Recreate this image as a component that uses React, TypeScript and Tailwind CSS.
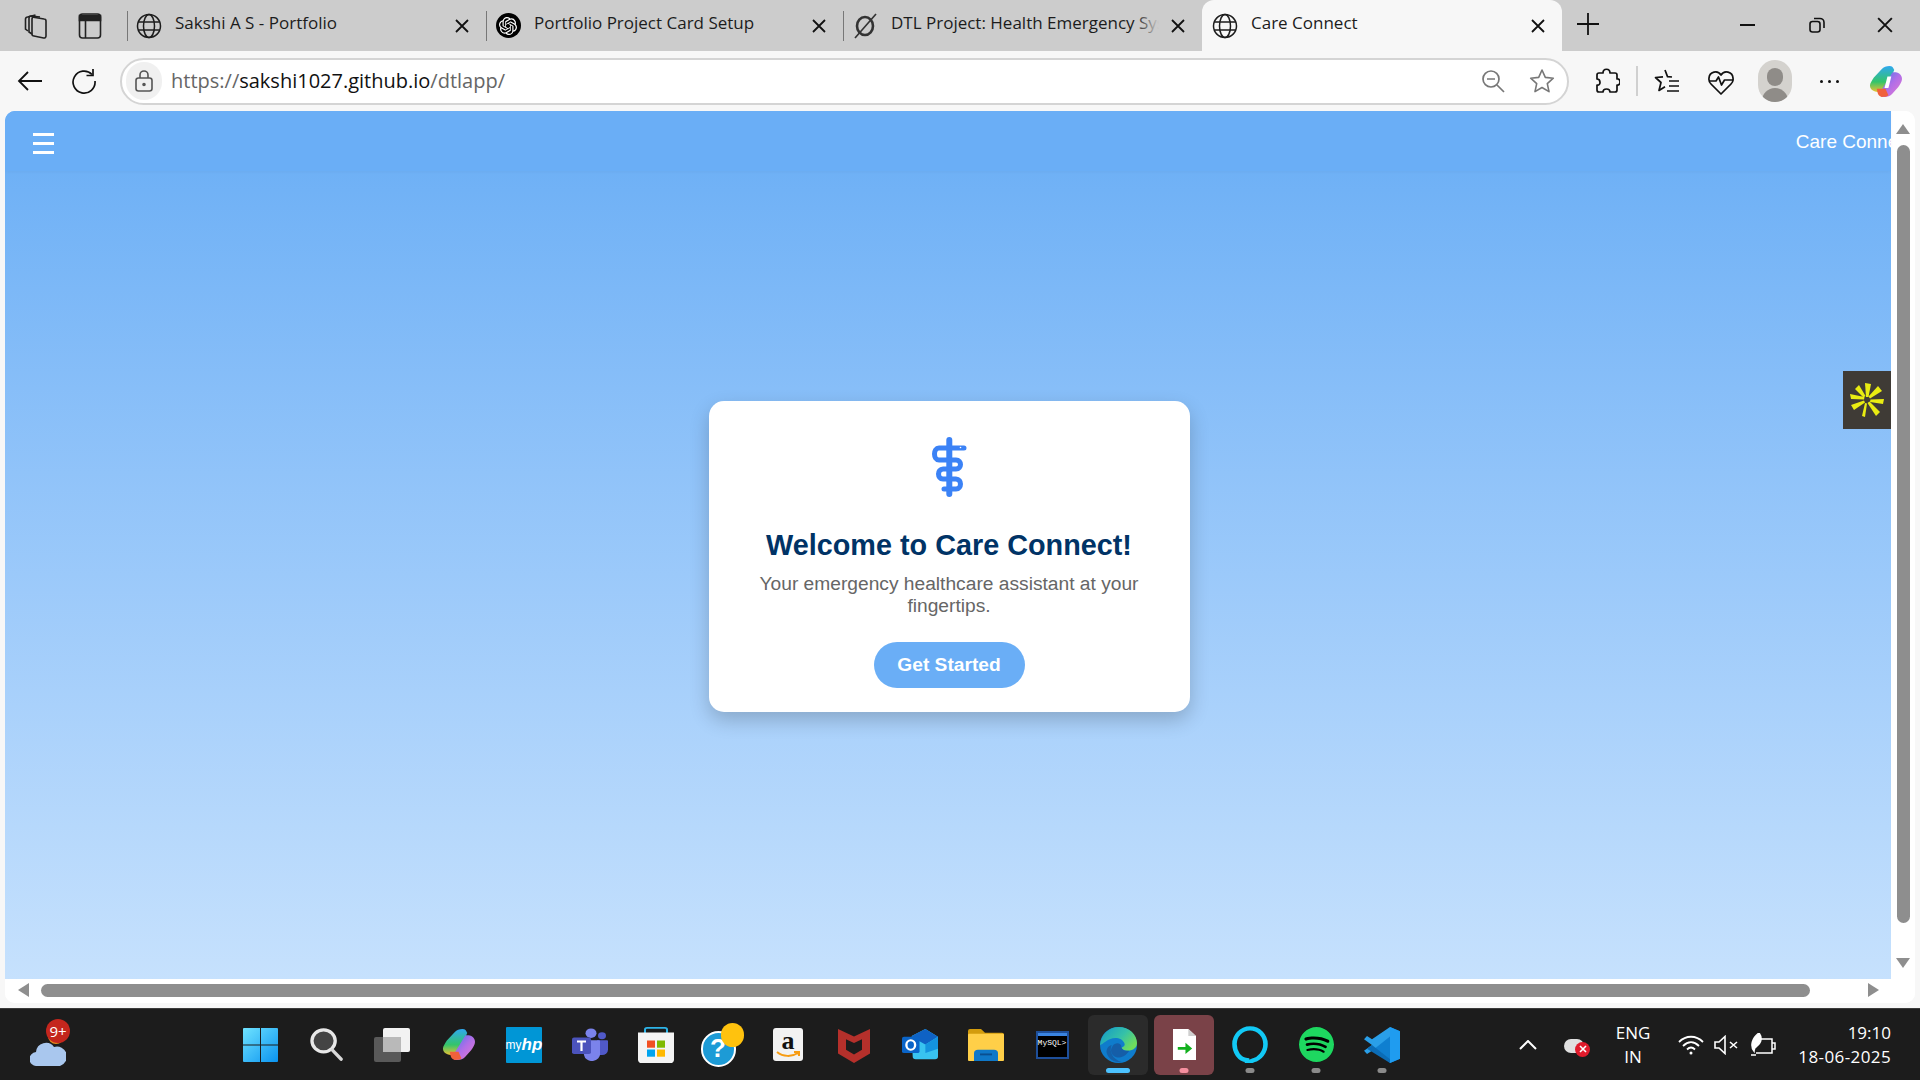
import React from 'react';
import { SiOpenai, SiSpotify } from 'react-icons/si';

const UI_FONT = { fontFamily: '"Open Sans", "Noto Sans", sans-serif' };

const GlobeIcon = () => (
  <svg width="26" height="26" viewBox="0 0 26 26" fill="none" stroke="#1c1c1c" strokeWidth="1.5">
    <circle cx="13" cy="13" r="11.5" />
    <ellipse cx="13" cy="13" rx="5.5" ry="11.5" />
    <path d="M2.5 9h21M2.5 17h21" />
  </svg>
);

const PerplexityIcon = () => (
  <svg width="26" height="28" viewBox="0 0 26 28" fill="none" stroke="#333" strokeWidth="2.6">
    <ellipse cx="13" cy="14" rx="8" ry="9" />
    <path d="M24 2 3 26" strokeWidth="1.6" />
  </svg>
);

const OpenAiIcon = () => (
  <div className="flex h-[25px] w-[25px] items-center justify-center rounded-full bg-black text-white">
    <SiOpenai size={18} />
  </div>
);

const CloseIcon = ({ size = 14, width = 1.8 }: { size?: number; width?: number }) => (
  <svg width={size} height={size} viewBox="0 0 14 14" stroke="#111" strokeWidth={width} fill="none">
    <path d="M1 1l12 12M13 1 1 13" />
  </svg>
);

type TabProps = {
  icon: React.ReactNode;
  title: string;
  width: string;
  active?: boolean;
  fade?: boolean;
};

const Tab = ({ icon, title, width, active, fade }: TabProps) => (
  <div className={`relative flex h-[51px] shrink-0 items-center ${width} ${active ? 'rounded-t-[12px] bg-[#f7f7f7] pl-[10px]' : 'pl-[9px]'}`}>
    {!active && <div className="absolute left-0 top-[11px] h-[30px] w-[1px] bg-[#777]" />}
    <div className="flex w-[26px] shrink-0 items-center justify-center">{icon}</div>
    <div className="relative ml-[13px] mb-[5px] w-[268px] overflow-hidden whitespace-nowrap text-[17px] text-[#1c1c1c]">
      {title}
      {fade && <div className="absolute inset-y-0 right-0 w-[24px] bg-gradient-to-r from-transparent to-[#cccccc]" />}
    </div>
    <div className="ml-auto mr-[17px] flex h-[26px] items-center">
      <CloseIcon />
    </div>
  </div>
);

const TabStrip = () => (
  <div className="flex h-[51px] shrink-0 items-start bg-[#cccccc]" style={UI_FONT}>
    <div className="flex h-[51px] w-[127px] shrink-0 items-center pl-[23px]">
      <svg width="26" height="28" viewBox="0 0 26 28" fill="none" stroke="#222" strokeWidth="1.6">
        <path d="M9 5l12 2a2 2 0 0 1 2 2v15a2 2 0 0 1-2.4 2L11 24a2 2 0 0 1-2-2V7a2 2 0 0 1 2-2z" />
        <path d="M9 22 6 20V6a2 2 0 0 1 2-2l9 1" />
        <path d="M5 19 2.5 17V7a2 2 0 0 1 2-2l8-2" />
      </svg>
      <svg className="ml-[29px]" width="24" height="28" viewBox="0 0 24 28" fill="none" stroke="#222" strokeWidth="1.6">
        <rect x="1.5" y="2" width="21" height="24" rx="3" />
        <path d="M1.5 3.5h21v5h-21z" fill="#222" />
        <path d="M7.5 8v18" />
      </svg>
    </div>
    <Tab icon={<GlobeIcon />} title="Sakshi A S - Portfolio" width="w-[359px]" />
    <Tab icon={<OpenAiIcon />} title="Portfolio Project Card Setup" width="w-[357px]" />
    <Tab icon={<PerplexityIcon />} title="DTL Project: Health Emergency System" width="w-[359px]" fade />
    <Tab icon={<GlobeIcon />} title="Care Connect" width="w-[360px]" active />
    <div className="ml-[15px] flex h-[47px] items-center">
      <svg width="22" height="22" viewBox="0 0 22 22" stroke="#111" strokeWidth="1.8">
        <path d="M11 0v22M0 11h22" />
      </svg>
    </div>
    <div className="ml-auto flex h-[50px] items-center">
      <div className="flex w-[69px] justify-center">
        <div className="h-[2px] w-[15px] bg-[#111]" />
      </div>
      <div className="flex w-[69px] justify-center">
        <svg width="16" height="16" viewBox="0 0 16 16" fill="none" stroke="#111" strokeWidth="1.6">
          <rect x="1" y="4.5" width="10" height="10.5" rx="2.5" />
          <path d="M5 1.5h6A4 4 0 0 1 15 5.5V11" />
        </svg>
      </div>
      <div className="flex w-[69px] justify-center pr-[2px]">
        <CloseIcon size={16} width={1.7} />
      </div>
    </div>
  </div>
);

const CopilotMark = ({ a, b, slit }: { a: string; b: string; slit?: boolean }) => (
  <svg width="33" height="31" viewBox="0 0 34 38" preserveAspectRatio="none">
    <defs>
      <linearGradient id={a} x1="0" y1="0" x2="0" y2="1">
        <stop offset="0" stopColor="#2fa8f0" />
        <stop offset="0.6" stopColor="#34c46a" />
        <stop offset="1" stopColor="#f2c230" />
      </linearGradient>
      <linearGradient id={b} x1="0" y1="0" x2="1" y2="1">
        <stop offset="0" stopColor="#3a7bea" />
        <stop offset="0.5" stopColor="#b06ee8" />
        <stop offset="1" stopColor="#e87ad0" />
      </linearGradient>
    </defs>
    <path d="M13 4c2-3 5-4 8-4 3 0 4 2 5 5l-9 24c-1 3-3 4-6 3-5 0-10-2-10-8 0-3 2-6 4-10z" fill={`url(#${a})`} />
    <path d="M24 8c4-1 10 1 10 8 0 3-2 7-4 10l-6 8c-2 3-5 4-8 4-3 0-4-1-5-5z" fill={`url(#${b})`} />
    <path d="M8 28h9l3 8c-2 2-4 2-7 2-3-1-4-3-5-10z" fill="#f0603c" />
    {slit && <path d="M19 13h4l-3 14h-4z" fill="#fff" />}
  </svg>
);

const Toolbar = () => (
  <div className="flex h-[60px] shrink-0 items-center bg-[#f7f7f7]" style={UI_FONT}>
    <div className="flex w-[60px] justify-center">
      <svg width="26" height="22" viewBox="0 0 26 22" fill="none" stroke="#111" strokeWidth="1.8">
        <path d="M25 11H2M11 2l-9 9 9 9" />
      </svg>
    </div>
    <div className="flex w-[48px] justify-center">
      <svg width="26" height="26" viewBox="0 0 26 26" fill="none" stroke="#111" strokeWidth="1.7">
        <path d="M21 6.5A11 11 0 1 0 24 13" />
        <path d="M22 1v6.5h-6.5" />
      </svg>
    </div>
    <div className="ml-[12px] flex h-[47px] w-[1449px] items-center rounded-full border-2 border-[#d4d4d4] bg-white pl-[4px] pr-[12px]">
      <div className="flex h-[38px] w-[36px] items-center justify-center rounded-full bg-[#f0f0f0]">
        <svg width="20" height="24" viewBox="0 0 20 24" fill="none" stroke="#555" strokeWidth="1.6">
          <rect x="2" y="9" width="16" height="13" rx="2.5" />
          <path d="M6 9V6a4 4 0 0 1 8 0v3" />
          <circle cx="10" cy="15.5" r="1" fill="#555" />
        </svg>
      </div>
      <span className="ml-[9px] whitespace-nowrap text-[20px] text-[#666]">
        https://<span className="text-[#111]">sakshi1027.github.io</span>/dtlapp/
      </span>
      <svg className="ml-auto" width="24" height="24" viewBox="0 0 24 24" fill="none" stroke="#777" strokeWidth="1.7">
        <circle cx="10" cy="10" r="8" />
        <path d="M6 10h8M16 16l7 7" />
      </svg>
      <svg className="ml-[24px]" width="26" height="26" viewBox="0 0 26 26" fill="none" stroke="#777" strokeWidth="1.6">
        <path d="M13 2l3.3 7.4 8 .8-6 5.4 1.700 8L13 19.5 6 23.6l1.700-8-6-5.400 8-.8z" strokeLinejoin="round" />
      </svg>
    </div>
    <div className="ml-[25px] flex items-center">
      <svg width="26" height="28" viewBox="0 0 26 28" fill="none" stroke="#111" strokeWidth="1.7" strokeLinejoin="round">
        <path d="M9 6c0-5 7-5 7 0h5a2 2 0 0 1 2 2v4c4-1 4 7 0 6v5a2 2 0 0 1-2 2h-5c0-4-7-4-7 0H5a2 2 0 0 1-2-2v-5c4 1 4-6 0-6V8a2 2 0 0 1 2-2z" />
      </svg>
      <div className="ml-[16px] h-[30px] w-[2px] bg-[#d0d0d0]" />
      <svg className="ml-[16px]" width="26" height="26" viewBox="0 0 26 26" fill="none" stroke="#111" strokeWidth="1.7" strokeLinejoin="round">
        <path d="M11 2l2.500 6.600 4.500.4M9 8.800l-7.500.7 5.500 5-2 8 6-3.800" />
        <path d="M15 13h10M15 18h10M13 23h12" />
      </svg>
      <svg className="ml-[27px]" width="28" height="28" viewBox="0 0 28 28" fill="none" stroke="#111" strokeWidth="1.7" strokeLinejoin="round">
        <path d="M4 17a7 7 0 0 1-2-6 6.500 6.500 0 0 1 12-3 6.500 6.500 0 0 1 12 3 7 7 0 0 1-2 6L14 27z" />
        <path d="M2 14h7l2.500-4 3 8 3-5h9" fill="#f7f7f7" />
      </svg>
      <div className="ml-[23px] flex h-[42px] w-[34px] flex-col items-center justify-end overflow-hidden rounded-full bg-[#d4d2ce]">
        <div className="mb-[2px] h-[18px] w-[16px] rounded-full bg-[#8f8c88]" />
        <div className="h-[14px] w-[26px] rounded-t-full bg-[#8f8c88]" />
      </div>
      <div className="ml-[28px] flex items-center gap-[5px]">
        <div className="h-[3px] w-[3px] rounded-full bg-[#111]" />
        <div className="h-[3px] w-[3px] rounded-full bg-[#111]" />
        <div className="h-[3px] w-[3px] rounded-full bg-[#111]" />
      </div>
      <div className="ml-[30px]">
        <CopilotMark a="copA" b="copB" slit />
      </div>
    </div>
  </div>
);

const ArrowBtn = ({ dir }: { dir: 'up' | 'down' | 'left' | 'right' }) => {
  const points = {
    up: '7,0 14,10 0,10',
    down: '0,0 14,0 7,10',
    left: '11,0 11,14 0,7',
    right: '0,0 11,7 0,14',
  }[dir];
  const vertical = dir === 'up' || dir === 'down';
  return (
    <svg width={vertical ? 14 : 11} height={vertical ? 10 : 14} viewBox={vertical ? '0 0 14 10' : '0 0 11 14'} fill="#8e8e8e">
      <polygon points={points} />
    </svg>
  );
};

const StaffIcon = () => (
  <svg width="36" height="60" viewBox="0 0 36 60" fill="none">
    <path d="M18.300 3v54" stroke="#3b82f6" strokeWidth="6" strokeLinecap="round" />
    <path d="M33 11H8c-6 0-6 12 0 12h17c6 0 6 9 0 9H12c-6 0-6 10 0 10h13c6 0 6 10 0 10H13" stroke="#3b82f6" strokeWidth="5" strokeLinecap="round" />
    <circle cx="29.500" cy="10.500" r="0.800" fill="#fff" />
  </svg>
);

const PageView = () => (
  <div className="mx-[5px] flex min-h-0 flex-1 flex-col overflow-hidden rounded-[10px] bg-white" style={{ fontFamily: '"Liberation Sans", Arial, sans-serif' }}>
    <div className="flex min-h-0 flex-1">
      <div className="relative flex min-w-0 flex-1 flex-col bg-gradient-to-b from-[#68adf5] to-[#c6e1fd]">
        <div className="h-[60px] shrink-0 overflow-hidden bg-[#6aaef6] shadow-[0_1px_3px_rgba(0,0,0,0.03)]">
          <div className="flex h-full w-[1916px] items-center justify-between pl-[28px] pr-[8px] pt-[2px]">
            <div className="flex w-[21px] flex-col gap-[6px] pt-[2px]">
              <div className="h-[3px] bg-white" />
              <div className="h-[3px] bg-white" />
              <div className="h-[3px] bg-white" />
            </div>
            <span className="whitespace-nowrap text-[19px] text-white">Care Connect</span>
          </div>
        </div>
        <div className="flex flex-1 items-start justify-center pl-[2px] pt-[230px]">
          <div className="flex h-[311px] w-[481px] flex-col items-center rounded-[15px] bg-white pt-[36px] shadow-[0_8px_20px_rgba(0,0,0,0.2)]">
            <StaffIcon />
            <h1 className="mt-[30px] text-[28.8px] leading-[36px] font-bold text-[#003366]">Welcome to Care Connect!</h1>
            <p className="mt-[10px] w-[400px] text-center text-[19.2px] leading-[22px] text-[#666666]">
              Your emergency healthcare assistant at your fingertips.
            </p>
            <button className="mt-[25px] h-[46px] w-[151px] rounded-full bg-[#6aaef6] text-[19.2px] font-bold text-white">Get Started</button>
          </div>
        </div>
        <div className="absolute right-0 top-[260px] flex h-[58px] w-[48px] items-center justify-center bg-[#3f3b36]">
          <svg width="34" height="34" viewBox="0 0 34 34" fill="#e9ec12">
            <polygon points="15,0 21,1 18.5,14 16,14" />
            <polygon points="28,3 32,8 20,15.5 18.5,13.5" />
            <polygon points="34,16 33,21 20,19 20.5,16.5" />
            <polygon points="30,29 26,33 17.5,20 19.5,18.5" />
            <polygon points="15,34 12,33 15,20 17,20.5" />
            <polygon points="4,27 1,22 14,17.5 15,19.5" />
            <polygon points="0,11 1,16 14,16.5 14.5,14" />
            <polygon points="9,2 5,6 13.5,14.5 15.5,13" />
          </svg>
        </div>
      </div>
      <div className="flex w-[24px] shrink-0 flex-col items-center bg-white pt-[13px]">
        <ArrowBtn dir="up" />
        <div className="mt-[11px] w-[13px] flex-1 rounded-full bg-[#8e8e8e]" />
        <div className="mb-[11px] mt-[35px]">
          <ArrowBtn dir="down" />
        </div>
      </div>
    </div>
    <div className="flex h-[24px] shrink-0 items-center bg-white pb-[2px] pl-[13px]">
      <ArrowBtn dir="left" />
      <div className="ml-[12px] h-[13px] w-[1769px] rounded-full bg-[#8e8e8e]" />
      <div className="ml-[58px]">
        <ArrowBtn dir="right" />
      </div>
    </div>
  </div>
);

const TaskItem = ({ children, active, pill }: { children: React.ReactNode; active?: string; pill?: string }) => (
  <div className="relative flex h-[60px] w-[66px] shrink-0 items-center justify-center">
    {active && <div className={`absolute inset-y-0 left-[3px] right-[3px] rounded-[6px] ${active}`} />}
    <div className="relative flex items-center justify-center">{children}</div>
    {pill && <div className={`absolute bottom-[2px] left-1/2 h-[5px] -translate-x-1/2 rounded-full ${pill}`} />}
  </div>
);

const WindowsLogo = () => (
  <svg width="35" height="34" viewBox="0 0 36 36" preserveAspectRatio="none">
    <defs>
      <linearGradient id="winG" x1="0" y1="0" x2="1" y2="1">
        <stop offset="0" stopColor="#6fe3ff" />
        <stop offset="1" stopColor="#0a93f0" />
      </linearGradient>
    </defs>
    <path d="M1 0h16.500v17.500H0V1a1 1 0 0 1 1-1zM18.500 0H35a1 1 0 0 1 1 1v16.500H18.500zM0 18.500h17.500V36H1a1 1 0 0 1-1-1zM18.500 18.500H36V35a1 1 0 0 1-1 1H18.500z" fill="url(#winG)" />
  </svg>
);

const SearchLogo = () => (
  <svg width="33" height="33" viewBox="0 0 34 36" preserveAspectRatio="none" fill="none">
    <circle cx="14" cy="14" r="12" fill="#444" stroke="#e8e8e8" strokeWidth="3.400" />
    <path d="M23 24l9 10" stroke="#d8d8d8" strokeWidth="3.600" strokeLinecap="round" />
  </svg>
);

const TaskViewLogo = () => (
  <svg width="36" height="34" viewBox="0 0 36 34">
    <rect x="9" y="0" width="27" height="24" rx="2" fill="#f2f2f2" />
    <rect x="0" y="9" width="27" height="25" rx="2" fill="#5e5e5e" opacity="0.920" />
    <rect x="9" y="9" width="18" height="15" fill="#b9b9b9" />
  </svg>
);

const MyHpLogo = () => (
  <div className="flex h-[36px] w-[36px] items-center justify-center rounded-[1px] bg-[#0096d6] text-[12px] text-white" style={{ fontFamily: '"Liberation Sans", sans-serif' }}>
    my<span className="text-[17px] font-bold italic">hp</span>
  </div>
);

const TeamsLogo = () => (
  <svg width="36" height="33" viewBox="0 0 36 38" preserveAspectRatio="none">
    <circle cx="19" cy="6" r="5.500" fill="#7b83eb" />
    <circle cx="30" cy="9" r="4" fill="#5059c9" />
    <path d="M25 14h10a1 1 0 0 1 1 1v10a6 6 0 0 1-6 6h-4z" fill="#5059c9" />
    <path d="M10 14h17a1 1 0 0 1 1 1v14a8 8 0 0 1-16 2z" fill="#7b83eb" />
    <rect x="0" y="11" width="19" height="19" rx="2" fill="#4b53bc" />
    <path d="M5 15.500h9M9.500 15.500v11" stroke="#fff" strokeWidth="2.200" />
  </svg>
);

const StoreLogo = () => (
  <svg width="36" height="36" viewBox="0 0 36 40" preserveAspectRatio="none">
    <path d="M7 8V3a2 2 0 0 1 2-2h18a2 2 0 0 1 2 2v5" fill="none" stroke="#2db4e8" strokeWidth="2" />
    <path d="M0 6h36v30a4 4 0 0 1-4 4H4a4 4 0 0 1-4-4z" fill="#f4f4f4" />
    <rect x="9" y="15" width="8" height="8" fill="#f25022" />
    <rect x="19" y="15" width="8" height="8" fill="#7fba00" />
    <rect x="9" y="25" width="8" height="8" fill="#00a4ef" />
    <rect x="19" y="25" width="8" height="8" fill="#ffb900" />
  </svg>
);

const HelpLogo = () => (
  <div className="relative h-[44px] w-[43px]">
    <div className="absolute bottom-0 left-0 flex h-[36px] w-[35px] items-center justify-center rounded-full border-2 border-white bg-[#1d9bd6] text-[26px] font-bold text-white" style={{ fontFamily: '"Liberation Sans", sans-serif' }}>
      ?
    </div>
    <div className="absolute right-0 top-0 h-[24px] w-[23px] rounded-full bg-[#ffc20e]" />
  </div>
);

const AmazonLogo = () => (
  <div className="relative flex h-[33px] w-[30px] flex-col items-center rounded-[3px] bg-[#f2f2f2]">
    <span className="text-[26px] leading-[25px] font-bold text-[#111]" style={{ fontFamily: '"Liberation Serif", serif' }}>a</span>
    <svg className="absolute bottom-[2px]" width="24" height="8" viewBox="0 0 24 8" fill="none" stroke="#f79c12" strokeWidth="2">
      <path d="M1 1c6 5 15 5 21 1M18 1h5v4" />
    </svg>
  </div>
);

const McAfeeLogo = () => (
  <svg width="32" height="36" viewBox="0 0 32 38" preserveAspectRatio="none">
    <path fillRule="evenodd" d="M0 2l16 8 16-8v26L16 38 0 28zM8 13v11l8 5 8-5V13l-8 4z" fill="#b5302b" />
  </svg>
);

const OutlookLogo = () => (
  <svg width="36" height="31" viewBox="0 0 37 36" preserveAspectRatio="none">
    <path d="M10 8 24 0l13 9v23a3 3 0 0 1-3 3H14a3 3 0 0 1-3-3z" fill="#38c3f0" />
    <path d="M10 8 24 0l13 9-13 9-13-8z" fill="#0f62c4" />
    <path d="M24 18 37 9v14l-13 5z" fill="#1493de" />
    <rect x="0" y="9" width="18" height="19" rx="2" fill="#0a64c8" />
    <ellipse cx="9" cy="18.500" rx="4.500" ry="5.500" fill="none" stroke="#fff" strokeWidth="2.400" />
  </svg>
);

const FilesLogo = () => (
  <svg width="36" height="32" viewBox="0 0 36 34" preserveAspectRatio="none">
    <path d="M0 2a2 2 0 0 1 2-2h11l4 4h17a2 2 0 0 1 2 2v4H0z" fill="#d39c0d" />
    <rect x="0" y="5" width="36" height="29" rx="1" fill="#ffcf48" />
    <path d="M6 34V26a4 4 0 0 1 4-4h16a4 4 0 0 1 4 4v8z" fill="#0f78c8" />
    <path d="M12 27h12" stroke="#0a4f90" strokeWidth="2" />
  </svg>
);

const MySqlLogo = () => (
  <div className="flex h-[28px] w-[33px] flex-col border-2 border-[#1e4f9a] bg-black">
    <div className="h-[3px] shrink-0 bg-[#3a84e0]" />
    <span className="text-center text-[8px] leading-[14px] whitespace-nowrap text-white" style={{ fontFamily: '"Liberation Mono", monospace' }}>MySQL&gt;</span>
  </div>
);

const EdgeLogo = () => (
  <svg width="37" height="36" viewBox="0 0 38 38" preserveAspectRatio="none">
    <defs>
      <linearGradient id="edgeA" x1="0" y1="0" x2="1" y2="0.6">
        <stop offset="0" stopColor="#1398c8" />
        <stop offset="0.6" stopColor="#35c1a8" />
        <stop offset="1" stopColor="#6fdc5c" />
      </linearGradient>
    </defs>
    <circle cx="19" cy="19" r="19" fill="#0f7ccc" />
    <path d="M0 19C1 7 10 0 19 0c11 0 19 8 19 17 0 5-4 8-9 8-4 0-6-1-7-3 3-1 4-3 3-5-2-5-9-7-15-4-5 2-8 6-10 6z" fill="url(#edgeA)" />
    <path d="M12 19c-3 7 1 15 10 18-7 1-13-3-15-9-1-4 1-8 5-9z" fill="#1560a8" />
    <path d="M13 20c2-4 9-4 9 1 0 2 3 5 8 4-3 5-8 8-13 7-6-2-7-8-4-12z" fill="#155ea8" />
  </svg>
);

const FileLogo = () => (
  <svg width="23" height="31" viewBox="0 0 24 36" preserveAspectRatio="none">
    <path d="M0 0h16l8 8v28H0z" fill="#fff" />
    <path d="M16 0l8 8h-8z" fill="#cfcfcf" />
    <path d="M5 21h8v-5l7 6.500L13 29v-5H5z" fill="#12b01e" />
  </svg>
);

const AlexaLogo = () => (
  <svg width="36" height="37" viewBox="0 0 36 40" preserveAspectRatio="none" fill="none">
    <path d="M15 37C7 36 2.500 28 2.500 19.500S9 2.500 18 2.500s15.500 8 15.500 17-6 16-12 17.500L15 40z" stroke="#12c9f5" strokeWidth="4.600" />
  </svg>
);

const VsCodeLogo = () => (
  <svg width="36" height="36" viewBox="0 0 36 38" preserveAspectRatio="none">
    <path d="M26 0l10 4.500v29L26 38 10 22l16-13z" fill="#0f7fd0" />
    <path d="M26 0l10 4.500v29L26 38z" fill="#1f9cf0" />
    <path d="M26 0v10L8 25l-5 3.500L0 25l8-6-8-6 3-3.500 5 3.500z" fill="#2a9fe8" />
    <path d="M8 19l18 15v4L3 23z" fill="#0b6cb6" />
  </svg>
);

const Tray = () => (
  <div className="ml-auto flex h-full items-center text-white" style={UI_FONT}>
    <svg width="18" height="10" viewBox="0 0 18 10" fill="none" stroke="#fff" strokeWidth="2">
      <path d="M1 9l8-8 8 8" />
    </svg>
    <div className="relative ml-[27px] h-[24px] w-[26px]">
      <div className="absolute left-0 top-[6px] h-[14px] w-[20px] rounded-full bg-[#e0e0e0]" />
      <div className="absolute right-[0px] top-[9px] flex h-[15px] w-[15px] items-center justify-center rounded-full bg-[#e01b2c]">
        <svg width="8" height="8" viewBox="0 0 8 8" stroke="#fff" strokeWidth="1.600"><path d="M1 1l6 6M7 1 1 7" /></svg>
      </div>
    </div>
    <div className="ml-[13px] flex w-[60px] flex-col items-center text-[17px] leading-[24px]">
      <span>ENG</span>
      <span>IN</span>
    </div>
    <svg className="ml-[15px]" width="26" height="20" viewBox="0 0 26 20" fill="none" stroke="#fff" strokeWidth="1.800">
      <path d="M1 7c7-7 17-7 24 0M5 11c5-5 11-5 16 0M9 14.500c2.500-2.500 5.500-2.500 8 0" />
      <circle cx="13" cy="18" r="1.500" fill="#fff" stroke="none" />
    </svg>
    <svg className="ml-[10px]" width="24" height="20" viewBox="0 0 24 20" fill="none" stroke="#fff" strokeWidth="1.600">
      <path d="M1 7h4l6-5.500v17L5 13H1z" />
      <path d="M16 7l7 6M23 7l-7 6" />
    </svg>
    <svg className="ml-[12px]" width="26" height="24" viewBox="0 0 26 24" fill="none" stroke="#fff" strokeWidth="1.500">
      <path d="M8 6h14v14H6M22 10h3v6h-3" />
      <path d="M9 0c3 4 3 9-2 13-2 1-3 3-3 5-4-5-2-13 5-18z" fill="#fff" />
      <path d="M1 22h5" />
    </svg>
    <div className="ml-[21px] mr-[29px] flex w-[94px] flex-col items-end text-[17px] leading-[24px] whitespace-nowrap">
      <span>19:10</span>
      <span className="tracking-[0.4px]">18-06-2025</span>
    </div>
  </div>
);

const Taskbar = () => (
  <div className="flex h-[72px] shrink-0 items-center border-t border-[#3a3a3a] bg-[#1c1c1c]">
    <div className="relative flex h-full w-[227px] shrink-0 items-center pl-[30px]">
      <div className="relative mt-[8px] h-[34px] w-[36px]">
        <div className="absolute right-[2px] top-[-4px] h-[16px] w-[16px] rounded-full bg-[#e88a1a]" />
        <svg className="absolute bottom-0 left-0" width="36" height="26" viewBox="0 0 36 26">
          <path d="M7 26a7 7 0 0 1-1-14 10 10 0 0 1 18-5 9 9 0 0 1 6 19z" fill="#a9c7ee" />
        </svg>
      </div>
      <div className="absolute left-[46px] top-[10px] flex h-[24px] w-[24px] items-center justify-center rounded-full bg-[#c4261d] text-[15px] text-white" style={UI_FONT}>
        9+
      </div>
    </div>
    <TaskItem><WindowsLogo /></TaskItem>
    <TaskItem><SearchLogo /></TaskItem>
    <TaskItem><TaskViewLogo /></TaskItem>
    <TaskItem><CopilotMark a="tcopA" b="tcopB" /></TaskItem>
    <TaskItem><MyHpLogo /></TaskItem>
    <TaskItem><TeamsLogo /></TaskItem>
    <TaskItem><StoreLogo /></TaskItem>
    <TaskItem><HelpLogo /></TaskItem>
    <TaskItem><AmazonLogo /></TaskItem>
    <TaskItem><McAfeeLogo /></TaskItem>
    <TaskItem><OutlookLogo /></TaskItem>
    <TaskItem><FilesLogo /></TaskItem>
    <TaskItem><MySqlLogo /></TaskItem>
    <TaskItem active="bg-[#2b2b2b]" pill="w-[24px] bg-[#4cc2ff]"><EdgeLogo /></TaskItem>
    <TaskItem active="bg-[#7a4248]" pill="w-[9px] bg-[#f58f9f]"><FileLogo /></TaskItem>
    <TaskItem pill="w-[9px] bg-[#8a8a8a]"><AlexaLogo /></TaskItem>
    <TaskItem pill="w-[9px] bg-[#8a8a8a]">
      <div className="rounded-full bg-black">
        <SiSpotify size={35} color="#1ed760" />
      </div>
    </TaskItem>
    <TaskItem pill="w-[9px] bg-[#8a8a8a]"><VsCodeLogo /></TaskItem>
    <Tray />
  </div>
);

export default function App() {
  return (
    <div className="flex h-[1080px] w-[1920px] flex-col overflow-hidden bg-[#f7f7f7]">
      <TabStrip />
      <Toolbar />
      <PageView />
      <div className="h-[5px] shrink-0" />
      <Taskbar />
    </div>
  );
}
